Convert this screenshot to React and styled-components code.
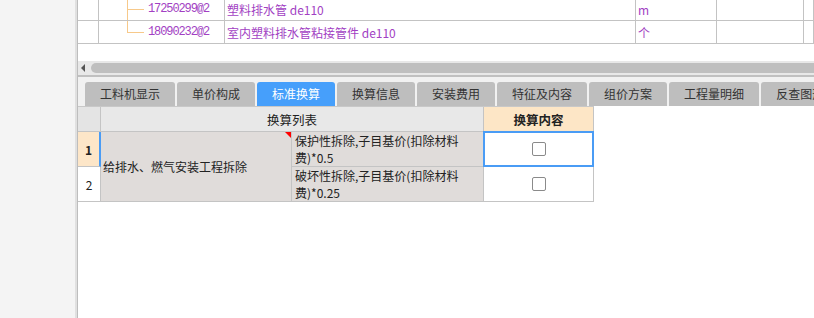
import React from "react";
import styled, { createGlobalStyle } from "styled-components";

const GlobalStyle = createGlobalStyle`
	html, body {
		margin: 0;
		padding: 0;
		background: #fff;
	}
	body {
		font-family: "Noto Sans CJK SC", "Liberation Sans", sans-serif;
		font-size: 12px;
		overflow: hidden;
	}
`;

const tabs = ["工料机显示", "单价构成", "标准换算", "换算信息", "安装费用", "特征及内容", "组价方案", "工程量明细", "反查图形工程量"];

const materials = [
	{ code: "17250299@2", name: "塑料排水管 de110", unit: "m", last: false },
	{ code: "18090232@2", name: "室内塑料排水管粘接管件 de110", unit: "个", last: true },
];

function TreeBranch({ last }) {
	return (
		<svg width="18" height="22" viewBox="0 0 18 22">
			<line x1="0.5" y1="0" x2="0.5" y2={last ? 11.5 : 22} stroke="#f7c98a" strokeWidth="1" />
			<line x1="0" y1="11.5" x2="17" y2="11.5" stroke="#f7c98a" strokeWidth="1" />
		</svg>
	);
}

function App() {
	return (
		<>
			<GlobalStyle />
			<Page>
				<Sidebar />
				<Main>
					<TopArea>
						<TopGrid>
							{materials.map((m) => (
								<React.Fragment key={m.code}>
									<GridCell />
									<CodeCell>
										<TreeBranch last={m.last} />
										<Code>{m.code}</Code>
									</CodeCell>
									<GridCell $purple>{m.name}</GridCell>
									<GridCell $purple>{m.unit}</GridCell>
									<GridCell />
									<GridCell />
								</React.Fragment>
							))}
						</TopGrid>
					</TopArea>

					<HScroll>
						<ScrollArrow />
						<ScrollThumb />
					</HScroll>

					<TabBar>
						{tabs.map((t) => (
							<Tab key={t} $active={t === "标准换算"}>{t}</Tab>
						))}
					</TabBar>

					<ConvGrid>
						<HeadCell $bg="#e4e4e4" />
						<HeadCell $span={2} $bg="#e8e8e8">换算列表</HeadCell>
						<HeadCell $bg="#fde6c6" $bold>换算内容</HeadCell>

						<NumCell $current>1</NumCell>
						<GroupCell>
							给排水、燃气安装工程拆除
							<CornerMark />
						</GroupCell>
						<DescCell>
							保护性拆除,子目基价(扣除材料
							<br />
							费)*0.5
						</DescCell>
						<CheckCell $selected>
							<CheckBox />
						</CheckCell>

						<NumCell>2</NumCell>
						<DescCell>
							破坏性拆除,子目基价(扣除材料
							<br />
							费)*0.25
						</DescCell>
						<CheckCell>
							<CheckBox />
						</CheckCell>
					</ConvGrid>
				</Main>
			</Page>
		</>
	);
}

const Page = styled.div`
	display: flex;
	width: 814px;
	height: 318px;
	overflow: hidden;
`;

const Sidebar = styled.div`
	flex: 0 0 77px;
	background: #f4f4f4;
	box-shadow: inset -2px 0 0 #e0e0e0;
`;

const Main = styled.div`
	flex: 1;
	min-width: 0;
	display: flex;
	flex-direction: column;
	border-left: 1px solid #bdbdbd;
	background: #fff;
`;

const TopArea = styled.div`
	height: 61px;
	overflow: hidden;
`;

const TopGrid = styled.div`
	display: grid;
	grid-template-columns: 21px 126px 411px 81px 87px 1fr;
	grid-auto-rows: 23px;
	margin-top: -2px;
`;

const GridCell = styled.div`
	box-sizing: border-box;
	border-right: 1px solid #c3c3c3;
	border-bottom: 1px solid #c3c3c3;
	display: flex;
	align-items: center;
	padding-left: 2px;
	white-space: nowrap;
	overflow: hidden;
	font-size: 12px;
	color: ${(p) => (p.$purple ? "#a23fc3" : "#333")};
`;

const CodeCell = styled(GridCell)`
	padding-left: 28px;
	align-items: stretch;

	svg {
		flex: 0 0 auto;
		align-self: center;
	}
`;

const Code = styled.span`
	display: flex;
	align-items: center;
	margin-left: 3px;
	font-family: "Liberation Mono", monospace;
	font-size: 12px;
	letter-spacing: -1.1px;
	color: #a23fc3;
`;

const HScroll = styled.div`
	height: 14px;
	background: #e8e8e8;
	border-bottom: 2px solid #c0c0c0;
	display: flex;
	align-items: center;
	gap: 6px;
	padding-left: 3px;
	overflow: hidden;
`;

const ScrollArrow = styled.span`
	flex: 0 0 auto;
	width: 0;
	height: 0;
	border-top: 4px solid transparent;
	border-bottom: 4px solid transparent;
	border-right: 4px solid #555;
`;

const ScrollThumb = styled.div`
	flex: 1;
	height: 10px;
	border-radius: 5px;
	background: #bfbfbf;
	margin-right: -12px;
`;

const TabBar = styled.div`
	display: flex;
	gap: 2px;
	padding: 5px 0 0 7px;
	background: #f1f1f1;
	overflow: hidden;
	white-space: nowrap;
`;

const Tab = styled.div`
	flex: 0 0 auto;
	height: 24px;
	line-height: 24px;
	padding: 0 15px;
	font-size: 12px;
	border-radius: 3px 3px 0 0;
	background: ${(p) => (p.$active ? "#469ffb" : "#bebebe")};
	color: ${(p) => (p.$active ? "#fff" : "#333")};
`;

const ConvGrid = styled.div`
	display: grid;
	grid-template-columns: 23px 191px 192px 110px;
	grid-template-rows: 25px 35px 35px;
	width: max-content;
	border-top: 1px solid #c8c8c8;
`;

const BaseCell = styled.div`
	box-sizing: border-box;
	border-right: 1px solid #c4c4c4;
	border-bottom: 1px solid #c4c4c4;
	display: flex;
	align-items: center;
	font-size: 12px;
	color: #222;
`;

const HeadCell = styled(BaseCell)`
	grid-column: span ${(p) => p.$span || 1};
	justify-content: center;
	background: ${(p) => p.$bg};
	font-weight: ${(p) => (p.$bold ? 700 : 400)};
	font-size: 12.5px;
`;

const NumCell = styled(BaseCell)`
	justify-content: center;
	background: ${(p) => (p.$current ? "#fde6c8" : "#fff")};
	font-weight: ${(p) => (p.$current ? 700 : 400)};
	border-right: ${(p) => (p.$current ? "2px solid #4a9cf5" : "1px solid #c4c4c4")};
`;

const GroupCell = styled(BaseCell)`
	position: relative;
	grid-row: span 2;
	background: #e0dcda;
	padding-left: 2px;
`;

const CornerMark = styled.span`
	position: absolute;
	top: 0;
	right: 0;
	width: 0;
	height: 0;
	border-top: 6px solid #f00;
	border-left: 6px solid transparent;
`;

const DescCell = styled(BaseCell)`
	background: #e0dcda;
	padding: 0 3px;
	line-height: 17px;
	white-space: nowrap;
`;

const CheckCell = styled(BaseCell)`
	position: relative;
	justify-content: center;
	background: #fff;

	${(p) =>
		p.$selected &&
		`
		&::after {
			content: "";
			position: absolute;
			top: -1px;
			left: -1px;
			right: -1px;
			bottom: -1px;
			border: 2px solid #4a9cf5;
		}
	`}
`;

const CheckBox = styled.span`
	width: 12px;
	height: 12px;
	border: 1px solid #8a8a8a;
	border-radius: 2px;
	background: #fff;
`;

export default App;
